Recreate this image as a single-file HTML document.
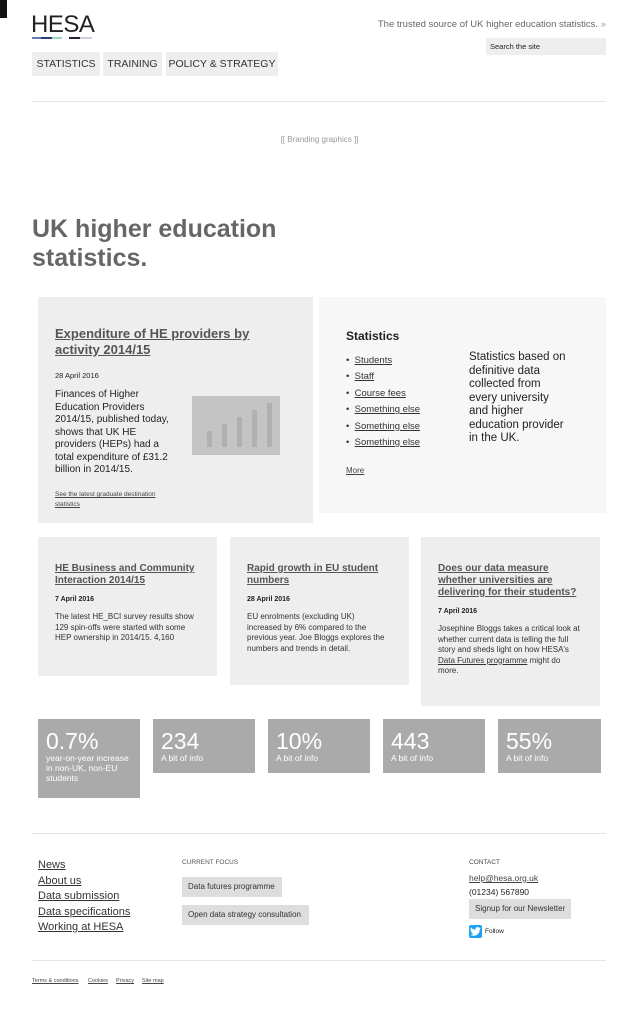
<!DOCTYPE html>
<html><head><meta charset="utf-8"><style>
*{margin:0;padding:0;box-sizing:border-box}
body{width:639px;height:1024px;background:#fff;font-family:"Liberation Sans",sans-serif;color:#222;position:relative;overflow:hidden}
.a{position:absolute}
u,a{color:inherit}
.nav{position:absolute;top:52px;height:24px;background:#eee;font-size:10.5px;color:#333;line-height:24px;text-align:center;white-space:nowrap}
.card{position:absolute;background:#eee;top:537px;width:179px;padding:26px 17px 0 17px}
.card h3{font-size:10px;font-weight:bold;color:#555;text-decoration:underline;line-height:12px}
.card .d{font-size:7px;font-weight:bold;margin-top:9px}
.card p{font-size:8px;line-height:10.5px;margin-top:9px;color:#333}
.st{position:absolute;top:719px;height:54px;background:#aaa;color:#fff;padding:10px 8px}
.st b{display:block;font-weight:normal;font-size:23px;line-height:24px}
.st span{display:block;font-size:8.5px;line-height:10px}
.ft a{display:block;font-size:11px;line-height:15.5px;color:#333;text-decoration:underline}
.btn{position:absolute;background:#ddd;font-size:8px;color:#333;line-height:20px;padding:0 6px;white-space:nowrap}
</style></head><body>
<div class="a" style="left:0;top:0;width:7px;height:18px;background:#111"></div>
<div class="a" style="left:31px;top:13px;font-size:24px;color:#222;line-height:24px;letter-spacing:-0.5px">HESA</div>
<div class="a" style="left:32px;top:37px;height:2px;width:60px;background:linear-gradient(90deg,#6a7ab5 0 15%,#2c3e7a 15% 33%,#9fd4c9 33% 50%,#fff 50% 62%,#223 62% 80%,#ccd 80%)"></div>
<div class="a" style="right:33px;top:19px;font-size:9.5px;color:#666">The trusted source of UK higher education statistics. <span style="color:#999">»</span></div>
<div class="a" style="left:486px;top:38px;width:120px;height:17px;background:#eee;font-size:7.5px;line-height:17px;padding-left:4px;color:#222">Search the site</div>
<div class="nav" style="left:32px;width:68px">STATISTICS</div>
<div class="nav" style="left:103px;width:59px">TRAINING</div>
<div class="nav" style="left:166px;width:112px">POLICY &amp; STRATEGY</div>
<div class="a" style="left:32px;top:101px;width:574px;height:1px;background:#e6e6e6"></div>
<div class="a" style="left:0;width:639px;top:135px;text-align:center;font-size:8px;color:#999">[[ Branding graphics ]]</div>
<div class="a" style="left:32px;top:215px;font-size:25px;font-weight:bold;color:#666;line-height:29px">UK higher education<br>statistics.</div>

<div class="a" style="left:38px;top:297px;width:275px;height:226px;background:#eee"></div>
<div class="a" style="left:55px;top:326px;font-size:13px;font-weight:bold;color:#555;text-decoration:underline;line-height:16px">Expenditure of HE providers by<br>activity 2014/15</div>
<div class="a" style="left:55px;top:371px;font-size:7.5px">28 April 2016</div>
<div class="a" style="left:55px;top:389px;font-size:10px;line-height:12.5px;color:#222">Finances of Higher<br>Education Providers<br>2014/15, published today,<br>shows that UK HE<br>providers (HEPs) had a<br>total expenditure of £31.2<br>billion in 2014/15.</div>
<div class="a" style="left:192px;top:396px;width:88px;height:59px;background:#c4c4c4">
<div class="a" style="left:15px;bottom:8px;width:5px;height:16px;background:#b0b0b0"></div>
<div class="a" style="left:30px;bottom:8px;width:5px;height:23px;background:#b0b0b0"></div>
<div class="a" style="left:45px;bottom:8px;width:5px;height:30px;background:#b0b0b0"></div>
<div class="a" style="left:60px;bottom:8px;width:5px;height:37px;background:#b0b0b0"></div>
<div class="a" style="left:75px;bottom:8px;width:5px;height:44px;background:#b0b0b0"></div>
</div>
<div class="a" style="left:55px;top:490px;font-size:6.5px;line-height:10px;text-decoration:underline;color:#444">See the latest graduate destination<br>statistics</div>

<div class="a" style="left:319px;top:297px;width:287px;height:216px;background:#f7f7f7"></div>
<div class="a" style="left:346px;top:329px;font-size:12px;font-weight:bold">Statistics</div>
<div class="a" style="left:346px;top:353px;font-size:9.5px;line-height:16.4px;color:#333">
<div>• &nbsp;<u>Students</u></div><div>• &nbsp;<u>Staff</u></div><div>• &nbsp;<u>Course fees</u></div><div>• &nbsp;<u>Something else</u></div><div>• &nbsp;<u>Something else</u></div><div>• &nbsp;<u>Something else</u></div></div>
<div class="a" style="left:469px;top:351px;font-size:11.5px;line-height:13.5px">Statistics based on<br>definitive data<br>collected from<br>every university<br>and higher<br>education provider<br>in the UK.</div>
<div class="a" style="left:346px;top:466px;font-size:8px;text-decoration:underline;color:#444">More</div>

<div class="card" style="left:38px;height:139px"><h3>HE Business and Community Interaction 2014/15</h3><div class="d">7 April 2016</div><p>The latest HE_BCI survey results show 129 spin-offs were started with some HEP ownership in 2014/15. 4,160</p></div>
<div class="card" style="left:230px;height:148px"><h3>Rapid growth in EU student numbers</h3><div class="d">28 April 2016</div><p>EU enrolments (excluding UK)<br>increased by 6% compared to the<br>previous year. Joe Bloggs explores the<br>numbers and trends in detail.</p></div>
<div class="card" style="left:421px;height:169px"><h3>Does our data measure<br>whether universities are<br>delivering for their students?</h3><div class="d">7 April 2016</div><p>Josephine Bloggs takes a critical look at<br>whether current data is telling the full<br>story and sheds light on how HESA's<br><u>Data Futures programme</u> might do<br>more.</p></div>

<div class="st" style="left:38px;width:102px;height:79px"><b>0.7%</b><span>year-on-year increase in non-UK, non-EU students</span></div>
<div class="st" style="left:153px;width:102px"><b>234</b><span>A bit of info</span></div>
<div class="st" style="left:268px;width:102px"><b>10%</b><span>A bit of info</span></div>
<div class="st" style="left:383px;width:102px"><b>443</b><span>A bit of info</span></div>
<div class="st" style="left:498px;width:103px"><b>55%</b><span>A bit of info</span></div>

<div class="a" style="left:32px;top:833px;width:574px;height:1px;background:#e6e6e6"></div>
<div class="a ft" style="left:38px;top:858px"><a>News</a><a>About us</a><a>Data submission</a><a>Data specifications</a><a>Working at HESA</a></div>
<div class="a" style="left:182px;top:859px;font-size:6.5px;color:#555">CURRENT FOCUS</div>
<div class="btn" style="left:182px;top:877px;width:100px">Data futures programme</div>
<div class="btn" style="left:182px;top:905px;width:127px">Open data strategy consultation</div>
<div class="a" style="left:469px;top:859px;font-size:6.5px;color:#444">CONTACT</div>
<div class="a" style="left:469px;top:873px;font-size:8.5px;text-decoration:underline;color:#444">help@hesa.org.uk</div>
<div class="a" style="left:469px;top:887px;font-size:8.5px">(01234) 567890</div>
<div class="btn" style="left:469px;top:899px;width:102px;height:20px;font-size:8px">Signup for our Newsletter</div>
<div class="a" style="left:469px;top:925px;width:13px;height:13px;background:#1da1f2;border-radius:2px"></div>
<svg class="a" style="left:470px;top:927px" width="11" height="9" viewBox="0 0 24 20"><path fill="#fff" d="M24 2.4a10 10 0 0 1-2.8.8A5 5 0 0 0 23.3.5a10 10 0 0 1-3.1 1.2A4.9 4.9 0 0 0 11.8 6 14 14 0 0 1 1.7.9a4.9 4.9 0 0 0 1.5 6.6A4.9 4.9 0 0 1 1 6.9a4.9 4.9 0 0 0 3.9 4.8 5 5 0 0 1-2.2.1 4.9 4.9 0 0 0 4.6 3.4A9.9 9.9 0 0 1 0 17.3 14 14 0 0 0 7.5 19.5c9.1 0 14-7.5 14-14v-.6A10 10 0 0 0 24 2.4z"/></svg>
<div class="a" style="left:485px;top:928px;font-size:6.5px">Follow</div>
<div class="a" style="left:32px;top:960px;width:574px;height:1px;background:#e6e6e6"></div>
<div class="a" style="left:32px;top:978px;font-size:5.5px;color:#444;text-decoration:underline">Terms &amp; conditions</div>
<div class="a" style="left:88px;top:978px;font-size:5.5px;color:#444;text-decoration:underline">Cookies</div>
<div class="a" style="left:116px;top:978px;font-size:5.5px;color:#444;text-decoration:underline">Privacy</div>
<div class="a" style="left:142px;top:978px;font-size:5.5px;color:#444;text-decoration:underline">Site map</div>
</body></html>
